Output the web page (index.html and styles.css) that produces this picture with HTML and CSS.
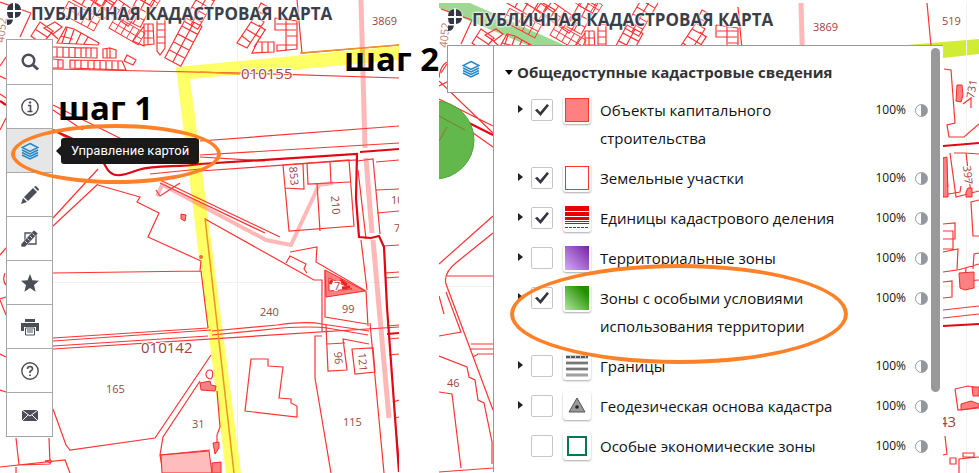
FILE: index.html
```html
<!DOCTYPE html>
<html lang="ru">
<head>
<meta charset="utf-8">
<title>Публичная кадастровая карта</title>
<link rel="stylesheet" href="styles.css">
</head>
<body>
<main class="guide">
  <section class="step step-one">
    <svg class="map" viewBox="0 0 399 473" preserveAspectRatio="xMinYMin slice" aria-hidden="true">
      <defs>
        <g id="lots"><path d="M0 0h18v45h-18zM9 0v45M0 9h18M0 18h18M0 27h18M0 36h18"/></g>
        <g id="quarter">
          <path d="M0 2l31 11M31 13L20 37M0 66l6-9M53 69l187 4 159 5"/>
          <path d="M40 22l13 9-11 13-11-8zM35 29l12 8M55 22l7 5-9 7-9-6zM49 31l9 8"/>
          <path d="M57 43l9-16 8 2 25 14-1 2zM61 36l12 3M67 28l-5 15M74 30l-5 14M81 33l-5 11M88 37l-4 7"/>
          <path d="M53 47l44 1v10l-44-1M57 47v10M63 47v10M69 47v10M75 47v10M81 48v9M86 48v9M91 48v9M103 49l7-1v10h-7zM110 48l6 2v8h-6M107 49v9"/>
          <path d="M53 59l10 1v8h-10M58 59v9M70 60l52 1 4 9-56-2zM75 60v8M81 60v8M88 60v9M94 61v8M100 61v8M106 61v8M112 61v8M118 61v8M127 55l9 5-3 5-9-4z"/>
          <path d="M144 26l-11 15 11 5zM144 24h9l1 20-10 1zM144 31h9M144 38h9M148 24v20M157 18l8-1v31l-5 7-3-4zM157 24h8M157 30h8M157 37h8M157 43h8"/>
          <use href="#lots" transform="translate(186 18) rotate(28)"/>
          <use href="#lots" transform="translate(62 14) rotate(-62) scale(.8)"/>
          <use href="#lots" transform="translate(66 -4) rotate(-60)"/>
          <use href="#lots" transform="translate(109 28) rotate(-60) scale(.75)"/>
          <use href="#lots" transform="translate(95 3) rotate(-55) scale(.9)"/>
          <use href="#lots" transform="translate(145 -16) rotate(28) scale(.9)"/>
          <use href="#lots" transform="translate(204 -14) rotate(30) scale(.9)"/>
          <use href="#lots" transform="translate(128 -8) rotate(-58) scale(.7)"/>
          <path d="M261 3l7 4-3 8-8-4zM255 16l9 6-17 26-10-5zM251 22l15 8M246 29l15 9M242 36l9 7M259 25l6 5-11 17M257 42h17v10l-22 1 5-10M262 42v10M268 42v10M275 18l22 3v28l-20 2v-6h20M275 18v12h21M286 18v32M276 24h21M287 36h10"/>
          <path d="M297 0l5 53 97-8"/>
        </g>
        <path id="pink-road" d="M361 0l4 148"/>
      </defs>
      <path class="tile" d="M237.500 0v473M0 282.500h399"/>
      <path class="yellow" d="M176 67L399 46v14L190 79l21 161 30 233h-15L197 240z"/>
      <g class="plot"><use href="#quarter"/>
        <path d="M0 76l6 3M0 94l6 4M0 130l6-12M53 105l105 52M53 110l30 20M53 130l45 26M0 255l6-7M5 273q-3 8 1 12M0 299l6-2M0 354l6 3M0 390l6 2M0 300l6 15"/>
        <path d="M53 218l45-49 M53 226l45-42M98 185l42 12-3 5 22 11-11 24 53 24-1 10-148 2M201 271l7 57M53 338l155-10M53 341l158-11M53 346l155-10M53 349l346-22"/>
        <path d="M200 141l199-15M200 155l199-12M200 171l157-11v5M200 157l65 4M150 174l50-5M180 183l-20 13-4-6M160 183l105 50M205 219l109 61h8v52M160 180l120 57"/>
        <path d="M212 331l65-6q30-4 45-1l47 7M212 335l70-7q30-2 45 0l41 7M211 355l-56 83-85 12-4-5-13-36M200 381l-37 56-3 18 3 18M160 455l50-5M217 391l3 36-3 8v15M210 370c-5 0-6 8 1 9 2-2 3-9-1-9z"/>
        <path d="M16 438l3 27 31-1-1-26M0 467l65-7 5 13M16 467v6"/>
        <path d="M251 359h17v7l15 1-4 31 12 1v4l6 3v11l-52-6zM286 263l4-7 16 8-2 5 3 4M290 252l27-5-1 15 50 29 2 35M325 270v47l42 7M326 325l2 46 19-1-4-31 26 5M327 344l18-1M352 349l21-1 2 24-20 2zM322 336h-7v42l16 95M370 323l14 150M361 240l6 50"/>
        <path d="M283 165l66-5 5 66-65 5zM320 231l-3-48M350 182l-42 2-1-21M330 162l1 21M285 188l19 1-1-25M357 161l16-2 7 75M376 162l23-2M376 190l23-1M377 213l22-2M358 170l8 69M383 246l16-1M385 273l14-1M385 278l14-1M387 326l12-1M389 339l10-1M389 355l10-1M395 418l4-1M396 430l3 30"/>
        <path d="M393 402l6-2"/>
      </g>
      <path class="main-line" d="M53 130c30 14 42 16 53 37 6 12 16 9 32 3 20-6 39-2 62-6l157-10-1 44 3 39 12 1 8-2 5 11 3 60 12 165M360 152l39-3M387 334l12-1M0 101l6 4"/>
      <path class="pink-road" d="M161 184l105 56 25 5 28-60 14-2M157 196l6-13"/>
      <g class="pink-road wide"><use href="#pink-road"/><path d="M366 158l6 75M373 240l16 178"/></g>
      <path class="orange-line" d="M205 218l29 255M200 72l40 2M300 53l99-8"/>
      <circle cx="201" cy="257" r="2" fill="#e67622"/>
      <path class="building soft" d="M161 455l48-4 3 22h-50z"/>
      <path class="building" d="M200 383l10-2 1 4 5 1-1 5-14-1zM212 463l9-1v11h-9zM213 443l6-1v6l-4 6zM45 461l6-1v3zM181 214l5 1-1 6-4-2z"/>
      <path class="building" d="M325 270l40 21-39 6zM329 278v13l23-2z" fill-rule="evenodd"/>
      <path class="map-dots" d="M330 284l2-4M342 288l8-1M340 280l7 5"/>
      <g class="map-text">
        <text x="372" y="25">3869</text>
        <text x="241" y="79" class="block-no">010155</text>
        <text x="141" y="353" class="block-no">010142</text>
        <text x="106" y="393">165</text><text x="192" y="428">31</text>
        <text x="260" y="316">240</text><text x="342" y="313">99</text>
        <text x="343" y="426">115</text><text x="334" y="290">7</text>
        <text transform="translate(289 167) rotate(84)">853</text>
        <text transform="translate(331 196) rotate(86)">210</text>
        <text transform="translate(334 352) rotate(86)">96</text>
        <text transform="translate(358 353) rotate(85)">121</text>
        <text x="391" y="204">10</text><text x="394" y="232">7</text>
        <text class="faint" transform="translate(4 43) rotate(-84)">4052</text>
      </g>
    </svg>
    <header class="brand">
      <svg class="logo" viewBox="0 0 16 24" aria-hidden="true"><path class="halo" d="M7 0q8 1 8 9t-7 8q-1 7-8 7V9q0-8 7-9z"/><path d="M6 1v7H0Q0 2 6 1zM8 1q6 1 6 7H8zM0 10h6v6H2Q0 14 0 10zM8 10h6q0 5-6 6zM0 17.500h6Q5 23 0 23z"/></svg>
      <h1 class="title">ПУБЛИЧНАЯ КАДАСТРОВАЯ КАРТА</h1>
    </header>
    <nav class="toolbar" aria-label="Инструменты карты">
      <button class="tool" type="button" aria-label="Поиск"><svg viewBox="0 0 18 18"><circle cx="7.500" cy="7.500" r="5.800" fill="none" stroke="currentColor" stroke-width="2.400"/><path d="M12 12l5 4.500" stroke="currentColor" stroke-width="3"/></svg></button>
      <button class="tool" type="button" aria-label="Информация"><svg viewBox="0 0 18 18" fill="none" stroke="currentColor"><circle cx="9" cy="9" r="8.200" stroke-width="1.400"/><path d="M7 7.500h2.500V13M6.500 13.500h5" stroke-width="1.600"/><circle cx="9" cy="4.500" r=".8" fill="currentColor"/></svg></button>
      <button class="tool active" type="button" aria-label="Управление картой"><svg id="layers" viewBox="0 0 18 18" fill="none" stroke="#2586c8" stroke-width="1.500"><path d="M9 1.500l8 4-8 4-8-4z"/><path d="M1 8l8 4 8-4M1 10.500l8 4 8-4M1 13l8 4 8-4"/></svg></button>
      <button class="tool" type="button" aria-label="Рисование"><svg viewBox="0 0 18 18" fill="currentColor"><path d="M0 18l2-6 4 4zM3 11l9-9 4 4-9 9zM13 1q1-1 2-1l3 3q0 1-1 2z"/></svg></button>
      <button class="tool" type="button" aria-label="Измерения"><svg viewBox="0 0 18 18"><path d="M4 3h11v11H4z" fill="none" stroke="currentColor" stroke-width="1.300"/><path d="M0 14L13 0l4 3.500L4 17H0z" fill="currentColor" stroke="#fff" stroke-width=".6"/><path d="M4 11l2 2M6.500 8.500l2 2M9 6l2 2M11.500 3.500l2 2" stroke="#fff" stroke-width=".8"/></svg></button>
      <button class="tool" type="button" aria-label="Избранное"><svg viewBox="0 0 18 18" fill="currentColor"><path d="M9 0l2.400 6.300L18 6.800l-5 4.300 1.600 6.700L9 14l-5.600 3.800L5 11.100 0 6.800l6.600-.5z"/></svg></button>
      <button class="tool" type="button" aria-label="Печать"><svg viewBox="0 0 18 18" fill="currentColor"><path d="M4 1h10v3H4zM0 5h18v8h-3V9H3v4H0z"/><path d="M4.500 10h9v7h-9z" fill="#fff" stroke="currentColor"/><path d="M6 12h6M6 14h6" stroke="currentColor"/></svg></button>
      <button class="tool" type="button" aria-label="Помощь"><svg viewBox="0 0 18 18" fill="none" stroke="currentColor"><circle cx="9" cy="9" r="8.200" stroke-width="1.400"/><path d="M6.500 7q0-2.500 2.500-2.500T11.500 7Q11.500 8 9 9.500V11" stroke-width="1.600"/><path d="M9 12.500v1.500" stroke-width="1.800"/></svg></button>
      <button class="tool" type="button" aria-label="Написать письмо"><svg viewBox="0 0 18 18"><path d="M1 4h16v11H1z" fill="currentColor"/><path d="M1 4l8 6 8-6M1 15l6-6M17 15l-6-6" fill="none" stroke="#fff"/></svg></button>
    </nav>
    <p class="step-label label-one">шаг 1</p>
    <span class="tooltip" role="tooltip">Управление картой</span>
    <span class="ring ring-one"></span>
  </section>

  <p class="step-label label-two">шаг 2</p>

  <section class="step step-two">
    <svg class="map" viewBox="0 0 540 470" preserveAspectRatio="xMinYMin slice" aria-hidden="true">
      <path fill="#9fd892" d="M7 0h24l94 42H88L0 5V0z"/>
      <path class="yellow lime" d="M468 42l72-6v15l-36 4v-13z"/>
      <path class="tile" d="M527.500 0v470M0 283.500h540"/>
      <g class="plot" transform="translate(2 4)"><use href="#quarter"/></g>
      <g class="pink-road wide"><use href="#pink-road" x="1"/></g>
      <g class="plot">
        <path d="M0 75q1-12 8-16M0 83l14-7M0 96l54 27M0 106l54 38M0 78l54 52M0 261l54-48M54 230l-36 29q-14 11-11 22l47 126M8 273h46M0 293l5 18M0 333l22-4-15-40M0 353l28 11 2 10 6 3 3 20 6 3 8 39v22M0 389l13 2 9 74M0 469l54-4M32 341h22M32 346h22M34 354l5-3h15"/>
        <path d="M488 0l4 43M505 66l7 1 4 53-8 2 2 12h15l15-13M505 154l4 30M511 150l6 44 23-6M515 150h12l5 41M526 150l14 1M504 192l17-3 1-6M504 221l12-1v16h-12M504 228h10v18h-10M504 249l15-3-1 21-14 2M519 267l21-6M540 197l-8 2 2 34h6M527 265l-1 13 14-1M504 279l9-1v16l-9 1M540 250l-5 1-1 15M504 307l36-4M504 315l36-4"/>
        <path d="M516 386l13-3 11 2M516 386l3 21 21-2M506 433l2 18-4 1M511 455h6v6h-6zM524 450h11v4h-11zM520 470v-14l20-2M524 101l8-6v10"/>
      </g>
      <path class="main-line" d="M28 119l26 13M504 143l36-3M504 323l36-2"/>
      <circle cx="-4" cy="137" r="39" fill="#62b84a" stroke="#50a339"/>
      <path d="M0 113l26 14M0 138l8-14" stroke="#86763a" fill="none"/>
      <path class="building" d="M518 82h5l1 10-2 7-5-1zM504 155l4-1 1 40h-5zM529 185h4v9h-6v-5zM520 270l15-1v16l-9 2-5-2zM533 384h7v9h-6zM522 401l10-3 8 3v3l-18 3z"/>
      <g class="map-text">
        <text x="374" y="28">3869</text><text x="503" y="22">519</text><text x="8" y="384">46</text>
        <text transform="translate(535 96) rotate(-80)">731</text>
        <text transform="translate(524 163) rotate(84)">397</text>
        <text x="500" y="424" class="block-no">43</text>
        <text class="faint" transform="translate(8 45) rotate(-84)">4052</text>
      </g>
    </svg>
    <header class="brand">
      <svg class="logo" viewBox="0 0 16 24" aria-hidden="true"><path class="halo" d="M7 0q8 1 8 9t-7 8q-1 7-8 7V9q0-8 7-9z"/><path d="M6 1v7H0Q0 2 6 1zM8 1q6 1 6 7H8zM0 10h6v6H2Q0 14 0 10zM8 10h6q0 5-6 6zM0 17.500h6Q5 23 0 23z"/></svg>
      <h2 class="title">ПУБЛИЧНАЯ КАДАСТРОВАЯ КАРТА</h2>
    </header>
    <div class="workspace">
      <button class="tab" type="button" aria-label="Слои карты"><svg viewBox="0 0 18 18"><use href="#layers"/></svg></button>
      <div class="panel">
        <h3 class="group"><svg class="caret" viewBox="0 0 8 5" aria-hidden="true"><path d="M0 0h8L4 5z"/></svg>Общедоступные кадастровые сведения</h3>
        <ul class="layers">
          <li class="layer"><button class="expand" type="button" aria-label="Развернуть"></button><input class="check" type="checkbox" id="l1" checked><span class="swatch"><i class="fill capital"></i></span><label class="name" for="l1">Объекты капитального строительства</label><span class="percent">100%</span><button class="opacity" type="button" aria-label="Прозрачность"></button></li>
          <li class="layer"><button class="expand" type="button" aria-label="Развернуть"></button><input class="check" type="checkbox" id="l2" checked><span class="swatch"><i class="fill parcel"></i></span><label class="name" for="l2">Земельные участки</label><span class="percent">100%</span><button class="opacity" type="button" aria-label="Прозрачность"></button></li>
          <li class="layer"><button class="expand" type="button" aria-label="Развернуть"></button><input class="check" type="checkbox" id="l3" checked><span class="swatch"><svg viewBox="0 0 24 24"><g fill="#e60000"><path d="M0 0h24v5H0zM0 6h24v4H0zM0 11h24v3H0zM0 15h24v1H0zM0 17h24v1H0z"/><path d="M0 21.500h24" stroke="#e60000" stroke-dasharray="3 1"/></g></svg></span><label class="name" for="l3">Единицы кадастрового деления</label><span class="percent">100%</span><button class="opacity" type="button" aria-label="Прозрачность"></button></li>
          <li class="layer"><button class="expand" type="button" aria-label="Развернуть"></button><input class="check" type="checkbox" id="l4"><span class="swatch"><i class="fill territory"></i></span><label class="name" for="l4">Территориальные зоны</label><span class="percent">100%</span><button class="opacity" type="button" aria-label="Прозрачность"></button></li>
          <li class="layer"><button class="expand" type="button" aria-label="Развернуть"></button><input class="check" type="checkbox" id="l5" checked><span class="swatch"><i class="fill special"></i></span><label class="name" for="l5">Зоны с особыми условиями использования территории</label><span class="percent">100%</span><button class="opacity" type="button" aria-label="Прозрачность"></button></li>
          <li class="layer"><button class="expand" type="button" aria-label="Развернуть"></button><input class="check" type="checkbox" id="l6"><span class="swatch"><svg viewBox="0 0 24 24" fill="none" stroke="#77777b"><path stroke="#ccc" stroke-width="4" d="M1 3h22M1 9h22M1 15h22M1 21h22"/><path stroke="#555" stroke-width="2" stroke-dasharray="4 1" d="M1 3h22"/><path stroke-width="2" d="M1 9h22M1 15h22"/><path d="M1 21h22"/></svg></span><label class="name" for="l6">Границы</label><span class="percent">100%</span><button class="opacity" type="button" aria-label="Прозрачность"></button></li>
          <li class="layer"><button class="expand" type="button" aria-label="Развернуть"></button><input class="check" type="checkbox" id="l7"><span class="swatch"><svg viewBox="0 0 24 24"><path d="M12 4l8 14H4z" fill="#999" stroke="#555"/><circle cx="12" cy="13" r="1.800" fill="#222"/></svg></span><label class="name" for="l7">Геодезическая основа кадастра</label><span class="percent">100%</span><button class="opacity" type="button" aria-label="Прозрачность"></button></li>
          <li class="layer"><span></span><input class="check" type="checkbox" id="l8"><span class="swatch"><i class="fill economic"></i></span><label class="name" for="l8">Особые экономические зоны</label><span class="percent">100%</span><button class="opacity" type="button" aria-label="Прозрачность"></button></li>
        </ul>
        <span class="scrollbar"></span>
      </div>
    </div>
    <span class="ring ring-two"></span>
  </section>
</main>
</body>
</html>
```
FILE: styles.css
```css
* { box-sizing: border-box; }

body {
  margin: 0;
  background: #fff;
  color: #111;
  font-family: "Open Sans", "Noto Sans", sans-serif;
}

button { padding: 0; border: 0; background: none; }

.guide {
  position: relative;
  display: grid;
  grid-template-columns: 399fr 40fr 540fr;
  min-height: 100vh;
}

.step { position: relative; overflow: hidden; }
.step-two { grid-column: 3; margin-top: 3px; }

.map { position: absolute; inset: 0; width: 100%; height: 100%; }
.tile { fill: none; stroke: #f1f1f1; }
.plot { fill: none; stroke: #f33; stroke-width: 1.2; }
.main-line { fill: none; stroke: #e30613; stroke-width: 2.2; }
.yellow { fill: #ffff66; }
.lime { fill: #d0ec35; }
.orange-line { fill: none; stroke: #ee9420; stroke-width: 1.5; }
.pink-road { fill: none; stroke: #ff4d4d; stroke-opacity: .4; stroke-width: 4; }
.pink-road.wide { stroke-width: 5; }
.building { fill: #ff8080; stroke: #f22b2b; }
.building.soft { fill: #ffbcbc; }
.map-dots { fill: none; stroke: #e22; stroke-width: 3; }
.map-text {
  fill: #a04444;
  stroke: #fff;
  stroke-width: 2px;
  paint-order: stroke;
  font-size: 11px;
}
.block-no { font-size: 15px; }
.faint { opacity: .7; }

.brand {
  position: relative;
  display: flex;
  align-items: center;
  gap: 8px;
  height: 28px;
  padding-left: 7px;
}
.step-two .brand { height: 34px; padding-left: 9px; }
.logo { width: 16px; height: 24px; flex: none; fill: #333743; }
.halo { fill: #fff; opacity: .8; }
.title {
  margin: 0;
  color: #3b3f4b;
  font-size: 17px;
  line-height: 24px;
  white-space: nowrap;
  text-shadow: 0 0 2px #fff, 0 0 2px #fff, 0 0 3px #fff;
}

.toolbar {
  position: relative;
  width: 47px;
  margin: 11px 0 0 6px;
  border: 1px solid #a5a5a5;
  background: #fff;
}
.tool {
  display: flex;
  align-items: center;
  justify-content: center;
  width: 100%;
  height: 44px;
  color: #4b4e57;
}
.tool + .tool { border-top: 1px solid #aaa; }
.tool svg, .tab svg { width: 18px; height: 18px; }
.tool.active { background: #e6e6e6; }

.step-label {
  position: absolute;
  margin: 0;
  color: #000;
  font-size: 33px;
  font-weight: 700;
  line-height: 40px;
  white-space: nowrap;
}
.label-one { left: 58px; top: 88px; }
.label-two { left: 344px; top: 39px; z-index: 1; }

.tooltip {
  position: absolute;
  left: 61px;
  top: 138px;
  padding: 0 10px;
  border-radius: 3px;
  background: #1a1a1a;
  color: #fff;
  font: 13px/26px Roboto, sans-serif;
  white-space: nowrap;
}
.tooltip::before {
  content: "";
  position: absolute;
  left: -5px;
  top: 8px;
  border: solid transparent;
  border-width: 5px 5px 5px 0;
  border-right-color: #1a1a1a;
}

.ring { position: absolute; border: 4px solid #ff8127; border-radius: 50%; pointer-events: none; }
.ring-one { left: 11px; top: 124px; width: 210px; height: 60px; }
.ring-two { left: 71px; top: 261px; width: 338px; height: 100px; }

.workspace {
  position: relative;
  display: flex;
  align-items: flex-start;
  margin-top: 8px;
  padding: 0 36px 0 8px;
}
.tab {
  display: flex;
  align-items: center;
  justify-content: center;
  width: 46px;
  height: 48px;
  border: 1px solid #999;
  border-right: 0;
  background: #fff;
}
.panel {
  position: relative;
  flex: 1;
  padding: 12px 14px 6px 0;
  border: solid #999;
  border-width: 1px 0 0 1px;
  background: #fff;
}
.group {
  display: flex;
  align-items: center;
  gap: 4px;
  margin: 0 0 4px;
  padding-left: 11px;
  color: #333;
  font-size: 15px;
  line-height: 28px;
}
.caret { width: 8px; height: 5px; }
.layers { margin: 0; padding: 0 0 0 24px; list-style: none; }
.layer {
  display: grid;
  grid-template-columns: 13px 22px 28px 1fr auto 14px;
  align-items: start;
  padding: 6px 0;
  line-height: 28px;
}
.expand {
  width: 5px;
  height: 8px;
  margin-top: 9px;
  background: #222;
  clip-path: polygon(0 0, 100% 50%, 0 100%);
}
.check {
  appearance: none;
  display: grid;
  place-items: center;
  width: 22px;
  height: 22px;
  margin: 3px 0 0;
  border: 1px solid #c6c6c6;
  border-radius: 2px;
  background: #fff;
}
.check:checked::before {
  content: "";
  width: 14px;
  height: 12px;
  background: #33363f;
  clip-path: polygon(0 52%, 16% 40%, 37% 66%, 86% 0, 100% 12%, 40% 100%);
}
.swatch {
  display: grid;
  place-items: center;
  width: 28px;
  height: 28px;
  margin-left: 10px;
  border-radius: 3px;
  background: #fff;
  box-shadow: 0 1px 2px #aaa;
}
.swatch svg, .fill { width: 24px; height: 24px; }
.capital { border: 1px solid #f33; background: #ff8080; }
.parcel { border: 1px solid #f33; }
.territory { background: linear-gradient(225deg, #7423a3, #d5aaf5); }
.special { background: linear-gradient(225deg, #249000 20%, #b2e5a2); }
.economic { width: 20px; height: 20px; border: 2px solid #087850; }
.name { margin-left: 19px; font-size: 15px; }
.percent { margin: 0 9px 0 10px; font-size: 12px; }
.opacity {
  width: 13px;
  height: 13px;
  margin-top: 8px;
  border: 1px solid #999b9f;
  border-radius: 50%;
  background: linear-gradient(90deg, #fff 50%, #94979c 50%);
}
.scrollbar {
  position: absolute;
  top: 2px;
  right: 3px;
  width: 9px;
  height: 344px;
  border-radius: 5px;
  background: #999;
}
```
